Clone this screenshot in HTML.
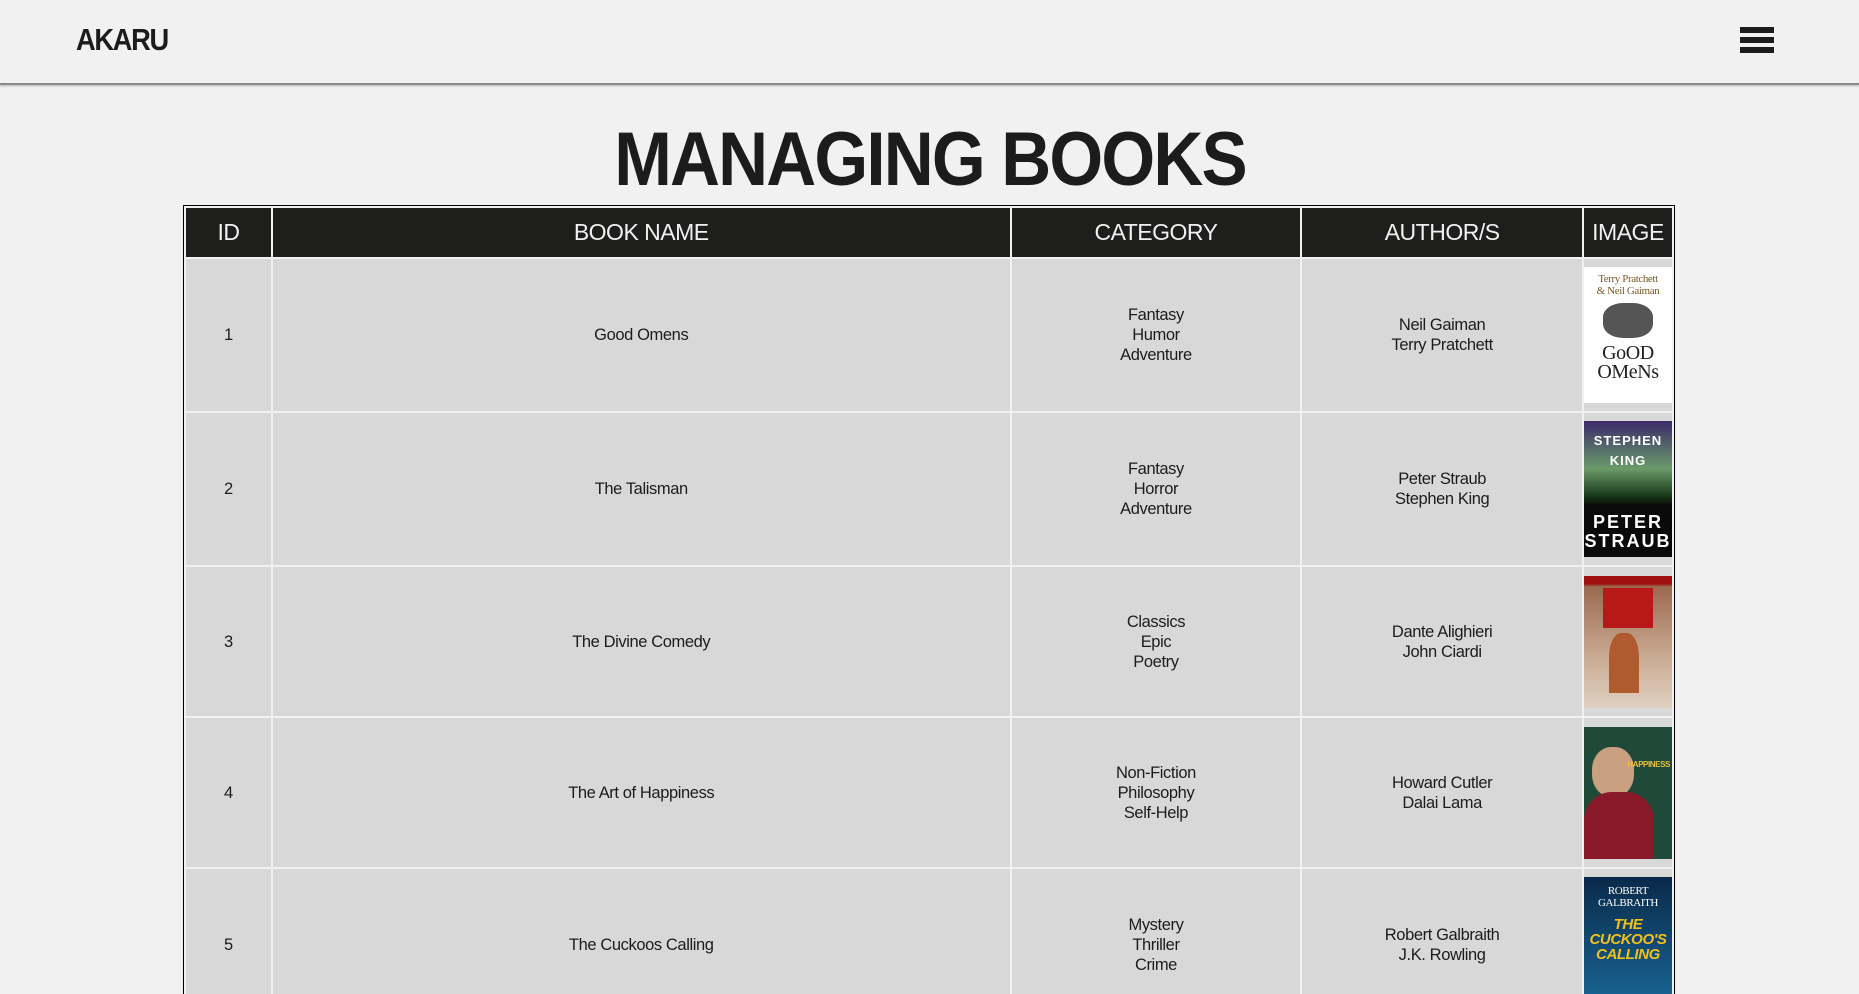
<!DOCTYPE html>
<html><head><meta charset="utf-8">
<style>
*{margin:0;padding:0;box-sizing:border-box}
html,body{width:1859px;height:994px;overflow:hidden;background:#f0f1f0;font-family:"Liberation Sans",Arial,sans-serif;color:#1c1c1c}
#wrap{position:relative;width:1859px;height:994px;overflow:hidden}
.hdr{position:absolute;left:0;top:0;width:1859px;height:85px;border-bottom:2px solid #8a8a8a;box-shadow:0 1px 2px rgba(0,0,0,.25)}
.logo{position:absolute;left:76px;top:24px;font-size:31px;font-weight:bold;letter-spacing:-1.5px;line-height:32px;transform:scaleX(.88);transform-origin:left}
.ham{position:absolute;left:1740px;width:34px;height:6px;background:#1c1c1c}
h1{position:absolute;left:0;width:1859px;top:122px;text-align:center;font-size:76px;font-weight:bold;letter-spacing:-2px;line-height:76px}
h1 span{display:inline-block;transform:scaleX(.91)}
table{position:absolute;left:183px;top:205px;width:1492px;border:1px solid #000;border-collapse:separate;border-spacing:2px;background:#f0f1f0}
th{background:#1e1e1c;color:#f0f0f0;font-weight:normal;font-size:23px;height:49px;letter-spacing:-.5px}
td{background:#d8d8d8;text-align:center;font-size:16.5px;line-height:20px;letter-spacing:-.4px;padding:0}
.img{padding:0;vertical-align:middle}
.cov{width:88px;height:136px;margin:0 auto;position:relative;overflow:hidden;font-family:"Liberation Serif",serif;text-align:center}
</style></head><body>
<div id="wrap">
<div class="hdr">
<div class="logo">AKARU</div>
<div class="ham" style="top:27px"></div>
<div class="ham" style="top:37px"></div>
<div class="ham" style="top:47px"></div>
</div>
<h1><span>MANAGING BOOKS</span></h1>
<table>
<colgroup><col style="width:85px"><col style="width:738px"><col style="width:289px"><col style="width:280px"><col style="width:88px"></colgroup>
<tr><th>ID</th><th>BOOK NAME</th><th>CATEGORY</th><th>AUTHOR/S</th><th>IMAGE</th></tr>
<tr style="height:152px"><td>1</td><td>Good Omens</td><td>Fantasy<br>Humor<br>Adventure</td><td>Neil Gaiman<br>Terry Pratchett</td>
<td class="img"><div class="cov" style="background:#fff;color:#7a5a2a"><div style="font-size:11px;line-height:12px;padding-top:6px">Terry Pratchett<br>&amp; Neil Gaiman</div><div style="width:50px;height:35px;margin:6px auto;background:#555;border-radius:40%"></div><div style="color:#222;font-size:20px;line-height:19px">GoOD<br>OMeNs</div></div></td></tr>
<tr style="height:152px"><td>2</td><td>The Talisman</td><td>Fantasy<br>Horror<br>Adventure</td><td>Peter Straub<br>Stephen King</td>
<td class="img"><div class="cov" style="background:linear-gradient(#3b2c6a 0%,#6a9a6a 35%,#1a3a1a 55%,#0a0a0a 62%);color:#fff;font-family:'Liberation Sans',sans-serif;font-weight:bold"><div style="font-size:13px;padding-top:10px;letter-spacing:1px">STEPHEN<br>KING</div><div style="font-size:18px;line-height:19px;position:absolute;bottom:6px;width:100%;letter-spacing:2px">PETER<br>STRAUB</div></div></td></tr>
<tr style="height:149px"><td>3</td><td>The Divine Comedy</td><td>Classics<br>Epic<br>Poetry</td><td>Dante Alighieri<br>John Ciardi</td>
<td class="img"><div class="cov" style="background:linear-gradient(#a01010 0%,#a01010 6%,#9a6a50 8%,#c8a890 60%,#e0d0c0 100%);height:132px"><div style="width:50px;height:40px;margin:12px auto 0;background:#b81818"></div><div style="width:30px;height:60px;margin:5px 0 0 25px;background:#b05a30;border-radius:40% 40% 0 0"></div></div></td></tr>
<tr style="height:149px"><td>4</td><td>The Art of Happiness</td><td>Non-Fiction<br>Philosophy<br>Self-Help</td><td>Howard Cutler<br>Dalai Lama</td>
<td class="img"><div class="cov" style="background:#1f4a3a;height:132px"><div style="position:absolute;left:8px;top:20px;width:42px;height:50px;background:#c9a080;border-radius:45%"></div><div style="position:absolute;left:0;top:65px;width:70px;height:71px;background:#8a1a2a;border-radius:40% 40% 0 0"></div><div style="position:absolute;right:2px;top:28px;font-size:8px;color:#e8c040;font-family:'Liberation Sans';font-weight:bold">HAPPINESS</div></div></td></tr>
<tr style="height:152px"><td>5</td><td>The Cuckoos Calling</td><td>Mystery<br>Thriller<br>Crime</td><td>Robert Galbraith<br>J.K. Rowling</td>
<td class="img" style="vertical-align:top;padding-top:8px"><div class="cov" style="background:linear-gradient(#0a2a4a,#1a6a9a);color:#fff"><div style="font-size:11px;line-height:12px;padding-top:8px">ROBERT<br>GALBRAITH</div><div style="font-size:15px;line-height:15px;color:#f0c020;font-weight:bold;font-style:italic;font-family:'Liberation Sans';margin-top:8px">THE<br>CUCKOO'S<br>CALLING</div></div></td></tr>
</table>
</div>
</body></html>
